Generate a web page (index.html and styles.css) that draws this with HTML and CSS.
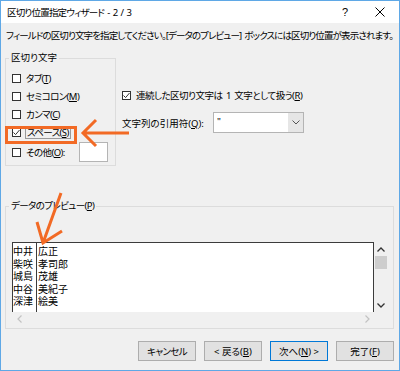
FILE: index.html
```html
<!DOCTYPE html>
<html lang="ja">
<head>
    <meta charset="UTF-8">
    <title>区切り位置指定ウィザード - 2 / 3</title>
    <link rel="stylesheet" href="styles.css">
</head>
<body>
    <div class="window">
        <div class="titlebar">
            <span class="title">区切り位置指定ウィザード - 2 / 3</span>
            <span class="help">?</span>
            <span class="close">
                <svg width="10" height="10" viewBox="0 0 10 10"><path d="M0.5 0.5 L9.5 9.5 M9.5 0.5 L0.5 9.5" stroke="#000" stroke-width="1" fill="none"/></svg>
            </span>
        </div>

        <div class="content">
            <p class="intro">フィールドの区切り文字を指定してください。[データのプレビュー] ボックスには区切り位置が表示されます。</p>

            <div class="options">
                <fieldset class="group delims">
                    <legend>区切り文字</legend>
                    <div class="check"><span class="box"></span><span class="kana">タブ(<u>T</u>)</span></div>
                    <div class="check"><span class="box"></span><span class="kana">セミコロン(<u>M</u>)</span></div>
                    <div class="check"><span class="box"></span><span class="kana">カンマ(<u>C</u>)</span></div>
                    <div class="check">
                        <span class="box"><svg width="7" height="7" viewBox="0 0 7 7"><path d="M0.5 3.5 L2.6 5.6 L6.5 1" stroke="#333" stroke-width="1" fill="none"/></svg></span>
                        <span class="kana focus">スペース(<u>S</u>)</span>
                    </div>
                    <div class="check other"><span class="box"></span><span class="kana">その他(<u>O</u>):</span><span class="textbox"></span></div>
                </fieldset>

                <div class="side">
                    <div class="check">
                        <span class="box"><svg width="7" height="7" viewBox="0 0 7 7"><path d="M0.5 3.5 L2.6 5.6 L6.5 1" stroke="#333" stroke-width="1" fill="none"/></svg></span>
                        <span class="merge">連続した区切り文字は 1 文字として扱う(<u>R</u>)</span>
                    </div>
                    <div class="quote-row">
                        <span class="quote-label">文字列の引用符(<u>Q</u>):</span>
                        <div class="combo">
                            <span class="combo-value">"</span>
                            <span class="combo-btn"><svg width="8" height="5" viewBox="0 0 8 5"><path d="M0.5 0.5 L4 4 L7.5 0.5" stroke="#555" stroke-width="1" fill="none"/></svg></span>
                        </div>
                    </div>
                </div>
            </div>

            <fieldset class="group preview">
                <legend class="kana">データのプレビュー(<u>P</u>)</legend>
                <div class="preview-box">
                    <div class="sheet">
                        <div class="col col1">
                            <div>中井</div>
                            <div>柴咲</div>
                            <div>城島</div>
                            <div>中谷</div>
                            <div>深津</div>
                        </div>
                        <div class="col col2">
                            <div>広正</div>
                            <div>孝司郎</div>
                            <div>茂雄</div>
                            <div>美紀子</div>
                            <div>絵美</div>
                        </div>
                    </div>
                    <div class="vscroll">
                        <span class="arrow"><svg width="8" height="5" viewBox="0 0 8 5"><path d="M0.5 4.5 L4 1 L7.5 4.5" stroke="#333" stroke-width="1.3" fill="none"/></svg></span>
                        <span class="thumb"></span>
                        <span class="track"></span>
                        <span class="arrow"><svg width="8" height="5" viewBox="0 0 8 5"><path d="M0.5 0.5 L4 4 L7.5 0.5" stroke="#333" stroke-width="1.3" fill="none"/></svg></span>
                    </div>
                    <div class="hscroll">
                        <svg width="5" height="8" viewBox="0 0 5 8"><path d="M4.5 0.5 L1 4 L4.5 7.5" stroke="#c2c2c2" stroke-width="1.2" fill="none"/></svg>
                        <svg width="5" height="8" viewBox="0 0 5 8"><path d="M0.5 0.5 L4 4 L0.5 7.5" stroke="#c2c2c2" stroke-width="1.2" fill="none"/></svg>
                    </div>
                    <div class="corner"></div>
                </div>
            </fieldset>

            <div class="buttons">
                <button class="kana">キャンセル</button>
                <button>&lt; 戻る(<u>B</u>)</button>
                <button class="default">次へ(<u>N</u>) &gt;</button>
                <button>完了(<u>F</u>)</button>
            </div>
        </div>

        <!-- 注釈の矢印と枠 -->
        <svg class="marks" width="400" height="371" viewBox="0 0 400 371">
            <rect x="6.5" y="127.5" width="69" height="15" fill="none" stroke="#f26a25" stroke-width="3"/>
            <path d="M96 120 L83 133 L96 146 M83 133 L129 133" fill="none" stroke="#f26a25" stroke-width="3"/>
            <path d="M61 193 L43 243 M37 222 L43 243 L62 231" fill="none" stroke="#f26a25" stroke-width="3"/>
        </svg>
    </div>
</body>
</html>
```

FILE: styles.css
```css
body {
    margin: 0;
    font-family: "Noto Sans", "Noto Sans CJK JP", sans-serif;
    font-feature-settings: "palt" 1;
    font-size: 9.5px;
    word-spacing: 1.5px;
    color: #000;
}

.kana {
    letter-spacing: -0.6px;
}

.window {
    position: relative;
    width: 400px;
    height: 371px;
    box-sizing: border-box;
    border: 1px solid #5fa8e6;
    background: #f0f0f0;
}

.titlebar {
    display: flex;
    align-items: center;
    height: 22px;
    background: #fff;
    padding-left: 6px;
}

.title {
    flex: 1;
    white-space: nowrap;
    letter-spacing: -0.8px;
}

.help {
    width: 20px;
    text-align: center;
    font-family: "Liberation Sans", sans-serif;
    font-size: 11px;
}

.close {
    width: 20px;
    margin-left: 15px;
    margin-right: 9px;
    display: flex;
    justify-content: center;
}

.content {
    padding: 0 5px 0 4px;
}

.intro {
    margin: 7px 0 0;
    padding-left: 1px;
    line-height: 12px;
    white-space: nowrap;
    letter-spacing: -0.88px;
}

.options {
    display: flex;
    margin-top: 11px;
}

.group {
    margin: 0;
    min-width: 0;
    border: 1px solid #dcdcdc;
}

.group legend {
    padding: 0 2px;
    margin-left: -3px;
    line-height: 10px;
}

.delims {
    box-sizing: border-box;
    width: 111px;
    padding: 6px 7px 3px 6px;
}

.check {
    display: flex;
    align-items: center;
    gap: 5px;
    height: 18px;
    white-space: nowrap;
}

.box {
    flex: none;
    width: 9px;
    height: 9px;
    box-sizing: border-box;
    border: 1px solid #333;
    background: #fff;
    display: flex;
    align-items: center;
    justify-content: center;
}

.focus {
    margin-left: -1px;
    padding: 0 1px;
    line-height: 11px;
    border: 1px solid #9a9a9a;
}

.other {
    height: 20px;
    margin-top: 1px;
}

.textbox {
    margin-left: auto;
    width: 29px;
    height: 20px;
    box-sizing: border-box;
    border: 1px solid #b4b4b4;
    background: #fff;
}

.side {
    margin-left: 6px;
    padding-top: 33px;
}

.merge {
    letter-spacing: -0.5px;
}

.quote-row {
    display: flex;
    align-items: center;
    margin-top: 8px;
    height: 21px;
}

.quote-label {
    width: 91px;
    white-space: nowrap;
}

.combo {
    display: flex;
    width: 91px;
    height: 21px;
    box-sizing: border-box;
    border: 1px solid #b4b4b4;
    background: #fff;
}

.combo-value {
    flex: 1;
    padding-left: 3px;
    line-height: 17px;
}

.combo-btn {
    width: 15px;
    background: #e6e6e6;
    display: flex;
    align-items: center;
    justify-content: center;
}

.preview {
    margin-top: 35px;
    padding: 31px 5px 2px 6px;
}

.preview-box {
    display: grid;
    grid-template-columns: 1fr 14px;
    grid-template-rows: 70px 14px;
}

.sheet {
    display: flex;
    background: #fff;
    border: 1px solid #3c3c3c;
    border-bottom: 0;
    font-family: "Noto Sans CJK JP", monospace;
    font-feature-settings: normal;
    font-size: 10px;
    line-height: 12.5px;
}

.col {
    padding-top: 2px;
    white-space: nowrap;
}

.col1 {
    width: 23px;
    border-right: 1px solid #3c3c3c;
}

.col2 {
    padding-left: 1px;
}

.vscroll {
    display: flex;
    flex-direction: column;
}

.vscroll .arrow {
    height: 14px;
    display: flex;
    align-items: center;
    justify-content: center;
}

.thumb {
    height: 13px;
    margin: 0 1px;
    background: #cdcdcd;
}

.track {
    flex: 1;
}

.hscroll {
    display: flex;
    align-items: center;
    justify-content: space-between;
    padding: 0 4px 0 5px;
}

.buttons {
    display: flex;
    justify-content: flex-end;
    gap: 8px;
    margin-top: 12px;
}

button {
    width: 58px;
    height: 20px;
    padding: 0;
    font: inherit;
    color: #000;
    background: #e1e1e1;
    border: 1px solid #adadad;
}

button.default {
    border-color: #0078d7;
}

.marks {
    position: absolute;
    top: -1px;
    left: -1px;
    pointer-events: none;
}
```
